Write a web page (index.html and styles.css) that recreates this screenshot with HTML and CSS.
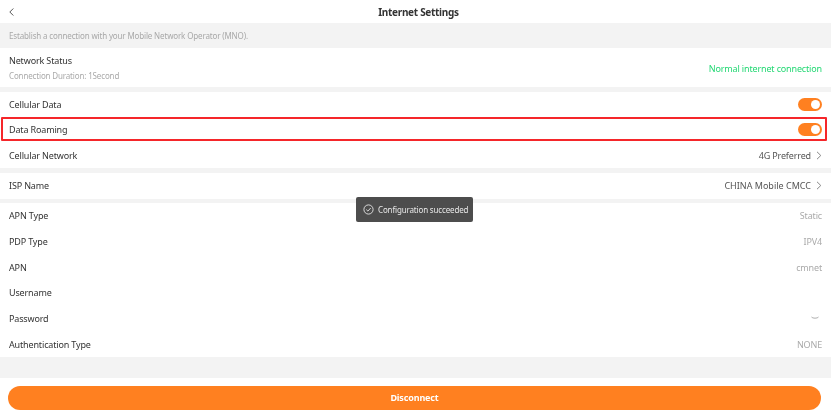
FILE: index.html
```html
<!DOCTYPE html>
<html lang="en">
<head>
<meta charset="utf-8">
<title>Internet Settings</title>
<link rel="stylesheet" href="styles.css">
</head>
<body>
<div class="page">
  <header class="header">
    <svg class="back" width="5" height="8" viewBox="0 0 5 8"><path d="M4.300 .5 .8 4l3.500 3.500" fill="none" stroke="#555" stroke-width="1"/></svg>
    <h1 class="title">Internet Settings</h1>
  </header>
  <p class="hint">Establish a connection with your Mobile Network Operator (MNO).</p>
  <section class="group status">
    <div>
      <div class="label">Network Status</div>
      <div class="sub">Connection Duration: 1Second</div>
    </div>
    <div class="ok">Normal internet connection</div>
  </section>
  <section class="group">
    <div class="row"><span class="label">Cellular Data</span><span class="switch"></span></div>
    <div class="row highlighted"><span class="label">Data Roaming</span><span class="switch"></span></div>
    <div class="row"><span class="label">Cellular Network</span><span class="link">4G Preferred<svg class="chev" width="6" height="9" viewBox="0 0 6 9"><path d="M1 .8 4.800 4.500 1 8.200" fill="none" stroke="#888" stroke-width="1"/></svg></span></div>
  </section>
  <section class="group">
    <div class="row isp"><span class="label">ISP Name</span><span class="link wide">CHINA Mobile CMCC<svg class="chev" width="6" height="9" viewBox="0 0 6 9"><path d="M1 .8 4.800 4.500 1 8.200" fill="none" stroke="#888" stroke-width="1"/></svg></span></div>
  </section>
  <section class="group details">
    <div class="row"><span class="label">APN Type</span><span class="value">Static</span></div>
    <div class="row"><span class="label">PDP Type</span><span class="value">IPV4</span></div>
    <div class="row"><span class="label">APN</span><span class="value">cmnet</span></div>
    <div class="row"><span class="label">Username</span><span class="value"></span></div>
    <div class="row"><span class="label">Password</span><svg class="eye" width="8" height="4" viewBox="0 0 8 4"><path d="M.5 1c1 1.600 6 1.600 7 0" fill="none" stroke="#999" stroke-width=".8"/></svg></div>
    <div class="row"><span class="label">Authentication Type</span><span class="value">NONE</span></div>
  </section>
  <footer class="footer"><button class="disconnect">Disconnect</button></footer>
  <div class="toast">
    <svg width="11" height="11" viewBox="0 0 11 11"><circle cx="5.500" cy="5.500" r="4.600" fill="none" stroke="#e8e8e8" stroke-width=".9"/><path d="M3.300 5.600 4.900 7.100 7.700 4" fill="none" stroke="#e8e8e8" stroke-width=".9"/></svg>
    <span class="toast-text">Configuration succeeded</span>
  </div>
</div>
</body>
</html>
```
FILE: styles.css
```css
* { box-sizing: border-box; }
html, body { margin: 0; padding: 0; }
body { width: 831px; height: 413px; overflow: hidden; background: #fff; font-family: "Noto Sans", "Open Sans", sans-serif; font-size: 9px; letter-spacing: -.15px; color: #333; }
.page { position: relative; height: 413px; display: flex; flex-direction: column; background: #f3f3f3; filter: blur(.3px); }
.header { height: 23px; background: #fff; display: flex; align-items: center; justify-content: center; padding-left: 6px; position: relative; }
.back { position: absolute; left: 9px; top: 8px; }
.title { margin: 0; font-size: 10px; font-weight: 700; letter-spacing: -.3px; color: #333; }
.hint { margin: 0; height: 25px; line-height: 25px; padding-left: 9px; font-size: 8px; color: #a8a8a8; }
.group { background: #fff; margin-bottom: 4.500px; }
.status { height: 39px; display: flex; align-items: center; justify-content: space-between; padding: 0 9px; }
.sub { font-size: 8px; color: #aaa; margin-top: 3px; }
.ok { color: #22d873; margin-top: 1px; }
.row { height: 25.500px; display: flex; align-items: center; justify-content: space-between; padding: 0 9px; }
.isp { height: 26px; }
.highlighted { position: relative; }
.highlighted::after { content: ""; position: absolute; left: 1px; right: 4px; top: 0; bottom: 2px; border: 2px solid #f5262a; border-radius: 1px; pointer-events: none; }
.switch { width: 24px; height: 13px; border-radius: 7px; background: #ff8020; position: relative; }
.switch::after { content: ""; position: absolute; right: 2px; top: 2px; width: 9px; height: 9px; border-radius: 50%; background: #fff; }
.link { color: #555; display: flex; align-items: center; gap: 5px; }
.wide { letter-spacing: 0; }
.chev { display: block; }
.details { margin-bottom: 0; }
.details .row { height: 25.670px; }
.value { color: #aaa; }
.eye { margin-right: 3px; }
.footer { position: absolute; left: 0; right: 0; bottom: 0; height: 35px; background: #fff; padding: 8px 10px 3px 8px; }
.disconnect { display: block; width: 100%; height: 24px; border: 0; border-radius: 12px; padding: 0 0 2px; background: #ff8020; color: #fff; font: 700 9px "Noto Sans", "Open Sans", sans-serif; letter-spacing: -.15px; }
.toast { position: absolute; left: 356px; top: 197px; width: 117px; height: 25px; border-radius: 2px; background: #4d4d4d; color: #e8e8e8; font-size: 8px; display: flex; align-items: center; gap: 4px; padding-left: 7px; }
.toast-text { white-space: nowrap; }
```
